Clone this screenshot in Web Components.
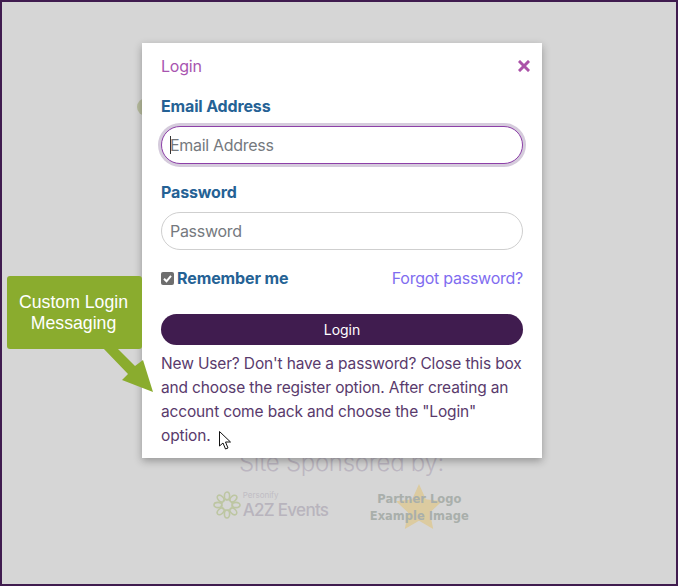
<!DOCTYPE html>
<html lang="en">
<head>
<meta charset="utf-8">
<title>Login</title>
<style>
  html, body { margin: 0; padding: 0; background: #ffffff; }
  body { font-family: "Inter", "Liberation Sans", sans-serif; }
</style>
</head>
<body>
<login-page>
  <sponsor-strip slot="behind"></sponsor-strip>
  <login-modal slot="modal">
    <form-field label="Email Address" placeholder="Email Address" focused></form-field>
    <form-field label="Password" placeholder="Password"></form-field>
    <remember-row></remember-row>
    <login-button>Login</login-button>
    <p>New User? Don't have a password? Close this box and choose the register option. After creating an account come back and choose the "Login" option.</p>
  </login-modal>
  <callout-note slot="note">Custom Login<br>Messaging</callout-note>
  <mouse-cursor slot="note"></mouse-cursor>
</login-page>

<script>
class LoginPage extends HTMLElement {
  connectedCallback() {
    this.attachShadow({ mode: 'open' });
    this.shadowRoot.innerHTML = `
      <style>
        :host {
          display: block;
          position: relative;
          box-sizing: border-box;
          width: 678px;
          height: 586px;
          border: 2px solid #401c4f;
          background: #d6d6d6;
          overflow: hidden;
        }
        .dot {
          width: 18px;
          height: 18px;
          margin: 96px 0 0 135px;
          border-radius: 50%;
          background: #b6bb9d;
        }
        .behind {
          display: block;
          margin-top: 332px;
        }
      </style>
      <div class="dot"></div>
      <div class="behind"><slot name="behind"></slot></div>
      <slot name="modal"></slot>
      <slot name="note"></slot>
    `;
  }
}

class SponsorStrip extends HTMLElement {
  connectedCallback() {
    this.attachShadow({ mode: 'open' });
    let petals = '';
    for (let i = 0; i < 8; i++) {
      petals += `<ellipse cx="14" cy="5" rx="2.6" ry="4" transform="rotate(${i * 45} 14 14)"/>`;
    }
    this.shadowRoot.innerHTML = `
      <style>
        :host {
          display: flex;
          flex-direction: column;
          align-items: center;
          padding-left: 5px;
          font-family: "Inter", "Liberation Sans", sans-serif;
        }
        h2 {
          margin: 0;
          font-size: 24px;
          line-height: 30px;
          font-weight: 300;
          letter-spacing: -0.3px;
          color: #bcb6c1;
        }
        .logos {
          display: flex;
          align-items: center;
          gap: 40px;
          margin-top: 5px;
        }
        .a2z {
          display: flex;
          align-items: center;
          gap: 2px;
          margin-bottom: 6px;
        }
        .a2z svg { width: 28px; height: 28px; }
        .a2z small {
          display: block;
          font-size: 8px;
          line-height: 9px;
          color: #c0bdc4;
        }
        .a2z b {
          display: block;
          font-size: 17px;
          line-height: 20px;
          font-weight: 500;
          letter-spacing: -0.7px;
          color: #b8b4bd;
        }
        .partner {
          display: grid;
          justify-items: center;
          align-items: start;
          width: 102px;
          height: 50px;
        }
        .partner > * { grid-area: 1 / 1; }
        .partner svg { width: 48px; height: 48px; }
        .partner span {
          position: relative;
          margin-top: 8px;
          font: 700 11.5px/17px "DejaVu Sans", sans-serif;
          text-align: center;
          white-space: nowrap;
          color: #a9afab;
        }
      </style>
      <h2>Site Sponsored by:</h2>
      <div class="logos">
        <div class="a2z">
          <svg viewBox="0 0 28 28" fill="none" stroke="#bdc6a2" stroke-width="1.6">
            <circle cx="14" cy="14" r="5.5" stroke-dasharray="2 1"/>
            ${petals}
          </svg>
          <div><small>Personify</small><b>A2Z Events</b></div>
        </div>
        <div class="partner">
          <svg viewBox="0 0 48 48"><path fill="#dccba0" d="M24 1l6.800 15.200 16.200 2-12 11.300 3.200 16.500L24 37.800 9.800 46 13 29.500 1 18.200l16.200-2z"/></svg>
          <span>Partner Logo<br>Example Image</span>
        </div>
      </div>
    `;
  }
}

class LoginModal extends HTMLElement {
  connectedCallback() {
    this.attachShadow({ mode: 'open' });
    this.shadowRoot.innerHTML = `
      <style>
        :host {
          display: block;
          position: absolute;
          left: 140px;
          top: 41px;
          box-sizing: border-box;
          width: 400px;
          height: 415px;
          padding: 12px 19px 0;
          background: #ffffff;
          box-shadow: 0 3px 8px rgba(0, 0, 0, 0.3);
          font-family: "Inter", "Liberation Sans", sans-serif;
        }
        header {
          display: flex;
          align-items: center;
          justify-content: space-between;
          height: 22px;
          margin-bottom: 19px;
          font-size: 16px;
          letter-spacing: -0.2px;
          color: #a855b0;
        }
        svg { width: 12px; height: 12px; margin-right: -7px; }
        ::slotted(p) {
          margin: 7px 0 0;
          font-size: 15.5px;
          line-height: 24px;
          letter-spacing: -0.15px;
          color: #593a6c;
        }
      </style>
      <header>
        <span>Login</span>
        <svg viewBox="0 0 12 12"><path d="M2 2l8 8M10 2l-8 8" stroke="#ab52a8" stroke-width="3" stroke-linecap="square" fill="none"/></svg>
      </header>
      <slot></slot>
    `;
  }
}

class FormField extends HTMLElement {
  connectedCallback() {
    this.attachShadow({ mode: 'open' });
    const focused = this.hasAttribute('focused');
    this.shadowRoot.innerHTML = `
      <style>
        :host {
          display: block;
          margin-bottom: 14px;
        }
        :host([focused]) { margin-bottom: 18px; }
        label {
          display: block;
          height: 20px;
          margin-bottom: 10px;
          font-size: 16px;
          line-height: 20px;
          font-weight: 700;
          letter-spacing: -0.15px;
          color: #256295;
        }
        .box {
          display: flex;
          align-items: center;
          box-sizing: border-box;
          height: 38px;
          padding: 0 8px;
          border: 1px solid #cfcfcf;
          border-radius: 19px;
          background: #ffffff;
          font-size: 16px;
          letter-spacing: -0.3px;
          color: #75797e;
        }
        .box.focused {
          border-color: #8d3fa8;
          box-shadow: 0 0 0 3px #d5cbdc;
        }
        .caret {
          width: 1px;
          height: 18px;
          margin-right: -1px;
          background: #333333;
        }
      </style>
      <label>${this.getAttribute('label')}</label>
      <div class="box ${focused ? 'focused' : ''}">
        ${focused ? '<span class="caret"></span>' : ''}
        <span>${this.getAttribute('placeholder')}</span>
      </div>
    `;
  }
}

class RememberRow extends HTMLElement {
  connectedCallback() {
    this.attachShadow({ mode: 'open' });
    this.shadowRoot.innerHTML = `
      <style>
        :host {
          display: flex;
          align-items: center;
          justify-content: space-between;
          height: 28px;
          margin-bottom: 22px;
          font-size: 16px;
        }
        .check {
          display: flex;
          align-items: center;
          gap: 3px;
          font-weight: 700;
          letter-spacing: -0.1px;
          color: #256295;
        }
        svg { width: 13px; height: 13px; }
        a {
          color: #7f6df0;
          letter-spacing: -0.25px;
          text-decoration: none;
        }
      </style>
      <span class="check">
        <svg viewBox="0 0 13 13">
          <rect width="13" height="13" rx="2" fill="#6e6e6e"/>
          <path d="M3 6.800l2.500 2.500L10 3.800" stroke="#ffffff" stroke-width="2" fill="none"/>
        </svg>
        Remember me
      </span>
      <a href="#">Forgot password?</a>
    `;
  }
}

class LoginButton extends HTMLElement {
  connectedCallback() {
    this.attachShadow({ mode: 'open' });
    this.shadowRoot.innerHTML = `
      <style>
        :host {
          display: flex;
          align-items: center;
          justify-content: center;
          height: 31px;
          border-radius: 16px;
          background: #401c4f;
          color: #ffffff;
          font-size: 14px;
          font-weight: 400;
        }
      </style>
      <slot></slot>
    `;
  }
}

class CalloutNote extends HTMLElement {
  connectedCallback() {
    this.attachShadow({ mode: 'open' });
    this.shadowRoot.innerHTML = `
      <style>
        :host {
          position: absolute;
          left: 5px;
          top: 274px;
          width: 135px;
          height: 73px;
          display: flex;
          align-items: center;
          justify-content: center;
          box-sizing: border-box;
          padding: 1px 2px 0 0;
          border-radius: 3px;
          background: #8aac2e;
          color: #ffffff;
          font: 17.700px/21px "Liberation Sans", Arial, sans-serif;
          text-align: center;
        }
        svg {
          position: absolute;
          left: 0;
          top: 0;
          width: 160px;
          height: 130px;
          overflow: visible;
        }
      </style>
      <div><slot></slot></div>
      <svg viewBox="0 0 160 130"><path fill="#8aac2e" d="M96 72h14l18 18 8-6 10 32-31-12 6-6z"/></svg>
    `;
  }
}

class MouseCursor extends HTMLElement {
  connectedCallback() {
    this.attachShadow({ mode: 'open' });
    this.shadowRoot.innerHTML = `
      <style>
        :host {
          position: absolute;
          left: 217px;
          top: 429px;
          width: 14px;
          height: 20px;
        }
        svg { display: block; width: 14px; height: 20px; }
      </style>
      <svg viewBox="0 0 14 20"><path d="M.5.500v14.500l3.500-3 2.500 6 2.500-1-2.500-6h5z" fill="#ffffff" stroke="#111111" stroke-width="1"/></svg>
    `;
  }
}

customElements.define('login-page', LoginPage);
customElements.define('sponsor-strip', SponsorStrip);
customElements.define('login-modal', LoginModal);
customElements.define('form-field', FormField);
customElements.define('remember-row', RememberRow);
customElements.define('login-button', LoginButton);
customElements.define('callout-note', CalloutNote);
customElements.define('mouse-cursor', MouseCursor);
</script>
</body>
</html>
